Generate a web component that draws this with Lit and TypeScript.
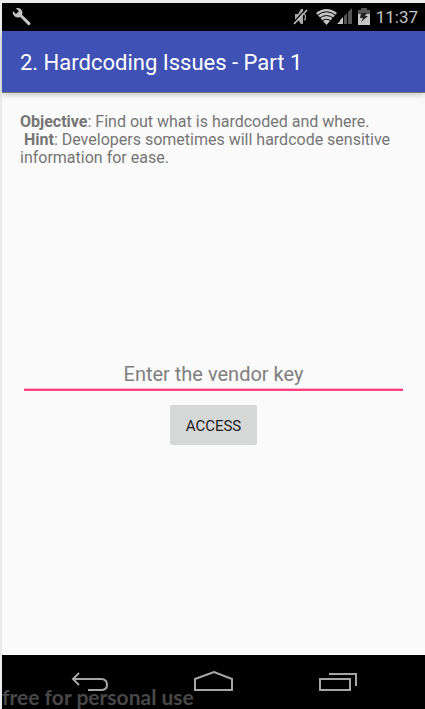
import { LitElement, html, css } from "lit";
import { customElement } from "lit/decorators.js";

@customElement("status-bar")
class StatusBar extends LitElement {
  static styles = css`
    :host {
      display: flex;
      align-items: center;
      justify-content: space-between;
      height: 28px;
      padding: 0 7px 0 9px;
      background: #000;
      color: #c4c4c4;
      font: 17px/28px Roboto, sans-serif;
    }
    .tray {
      display: flex;
      align-items: center;
    }
    svg {
      display: block;
    }
    .mute {
      margin-right: 8px;
    }
    .signal,
    .battery {
      margin-right: 6px;
    }
  `;

  render() {
    return html`
      <svg width="21" height="20" viewBox="0 0 21 20" aria-hidden="true">
        <path
          fill="#c4c4c4"
          d="M5 1.2C7.600 0.400 10.400 1.700 11.200 4.200C11.600 5.400 11.500 6.700 11 7.800L19.300 15.700C20.300 16.800 18.200 19 17 18L9.200 9.900C7.600 10.700 5.500 10.600 3.900 9.500C2.100 8.200 1.300 6 1.900 4L5 7.100L8 4.300Z"
        />
      </svg>
      <div class="tray">
        <svg class="mute" width="15" height="20" viewBox="0 0 15 20" aria-hidden="true">
          <path fill="#a8a8a8" d="M2 7H5L8 2H10V17H8L5 13H2Z" />
          <path fill="none" stroke="#a8a8a8" stroke-width="1.300" d="M11.500 7Q13.500 10 11.500 13.500" />
          <path stroke="#000" stroke-width="1.200" d="M0.500 15.500L12.500 2.500" />
          <path stroke="#c4c4c4" stroke-width="1.500" d="M1 17L14 3" />
        </svg>
        <svg width="21" height="20" viewBox="0 0 21 20" aria-hidden="true">
          <path fill="#c4c4c4" d="M0 6Q10.500 -2 21 6L10.500 18Z" />
          <path
            fill="none"
            stroke="#000"
            stroke-width="1"
            d="M1 8.500Q10.500 1 20 8.500M3 11.500Q10.500 5.500 18 11.500M5.500 14.500Q10.500 10 15.500 14.500"
          />
        </svg>
        <svg class="signal" width="15" height="20" viewBox="0 0 15 20" aria-hidden="true">
          <path fill="#c4c4c4" d="M0 17L3 14V17ZM3 13L6 10V17H3Z" />
          <path fill="#555" d="M7 9L10 6V17H7ZM11 5L15 1V17H11Z" />
        </svg>
        <svg class="battery" width="12" height="20" viewBox="0 0 12 20" aria-hidden="true">
          <path fill="#555" d="M3 1H9V3H12V7H0V3H3Z" />
          <path fill="#c4c4c4" d="M0 7H12V18H0Z" />
          <path fill="#222" d="M3 6H9L7 9H10L3 15L5 11H2Z" />
        </svg>
        <time>11:37</time>
      </div>
    `;
  }
}

@customElement("nav-bar")
class NavBar extends LitElement {
  static styles = css`
    :host {
      position: relative;
      display: flex;
      justify-content: center;
      gap: 65px;
      height: 54px;
      background: #000;
    }
    button {
      display: flex;
      align-items: center;
      justify-content: center;
      width: 60px;
      padding: 2px 0 0;
      border: 0;
      background: none;
    }
    path {
      fill: none;
      stroke: #a6a6a6;
      stroke-width: 2;
    }
    .watermark {
      position: absolute;
      left: 0;
      bottom: 0;
      color: #484848;
      font: 700 21px/24px Lato, sans-serif;
      white-space: nowrap;
      pointer-events: none;
    }
  `;

  render() {
    return html`
      <button aria-label="Back">
        <svg width="40" height="24" viewBox="0 0 40 24" aria-hidden="true">
          <path d="M10 2L4 8L10 14M4 8H32Q38 8 38 14Q38 19 32 19H19" />
        </svg>
      </button>
      <button aria-label="Home">
        <svg width="40" height="24" viewBox="0 0 40 24" aria-hidden="true">
          <path d="M1 19V8L20 1L38 8V19Z" />
        </svg>
      </button>
      <button aria-label="Recent apps">
        <svg width="40" height="24" viewBox="0 0 40 24" aria-hidden="true">
          <path d="M1 8H31V19H1ZM10 3H37V15" />
        </svg>
      </button>
      <span class="watermark">free for personal use</span>
    `;
  }
}

@customElement("app-root")
class AppRoot extends LitElement {
  static styles = css`
    :host {
      display: flex;
      flex-direction: column;
      box-sizing: border-box;
      min-height: 100vh;
      padding: 3px 0 0 2px;
      background: #ebebeb;
      font-family: Roboto, sans-serif;
    }
    header {
      z-index: 1;
      padding: 2px 18px 0;
      background: #3f51b5;
      box-shadow: 0 1px 0 #77777a, 0 3px 6px rgba(0, 0, 0, 0.2);
      color: #fff;
    }
    h1 {
      margin: 0;
      font-size: 22px;
      font-weight: 400;
      line-height: 59px;
    }
    main {
      flex: 1;
      display: grid;
      grid-template-rows: 1fr auto 1fr;
      padding: 0 18px;
      background: #fafafa;
    }
    .brief {
      margin-top: 21px;
      color: #757575;
      font-size: 16px;
      line-height: 18px;
    }
    .brief p {
      margin: 0;
    }
    .key {
      height: 35px;
      margin: 0 4px;
      padding: 2px 0 0;
      box-sizing: border-box;
      border: 0;
      border-bottom: 2px solid #ff4081;
      border-radius: 0;
      outline: 0;
      background: none;
      box-shadow: inset 0 -1px 0 #ffb3cc;
      color: #212121;
      font: 20px/32px Roboto, sans-serif;
      text-align: center;
    }
    .key::placeholder {
      color: #808080;
      opacity: 1;
    }
    .access {
      justify-self: center;
      align-self: start;
      height: 40px;
      margin-top: 14px;
      padding: 2px 16px 0;
      border: 0;
      border-radius: 2px;
      background: #d6d7d7;
      color: #212121;
      font: 15px/38px Roboto, sans-serif;
      text-transform: uppercase;
    }
  `;

  render() {
    return html`
      <status-bar></status-bar>
      <header><h1>2. Hardcoding Issues - Part 1</h1></header>
      <main>
        <div class="brief">
          <p><b>Objective</b>: Find out what is hardcoded and where.</p>
          <p>&nbsp;<b>Hint</b>: Developers sometimes will hardcode sensitive information for ease.</p>
        </div>
        <input class="key" type="text" placeholder="Enter the vendor key" aria-label="Vendor key" />
        <button class="access">Access</button>
      </main>
      <nav-bar></nav-bar>
    `;
  }
}
